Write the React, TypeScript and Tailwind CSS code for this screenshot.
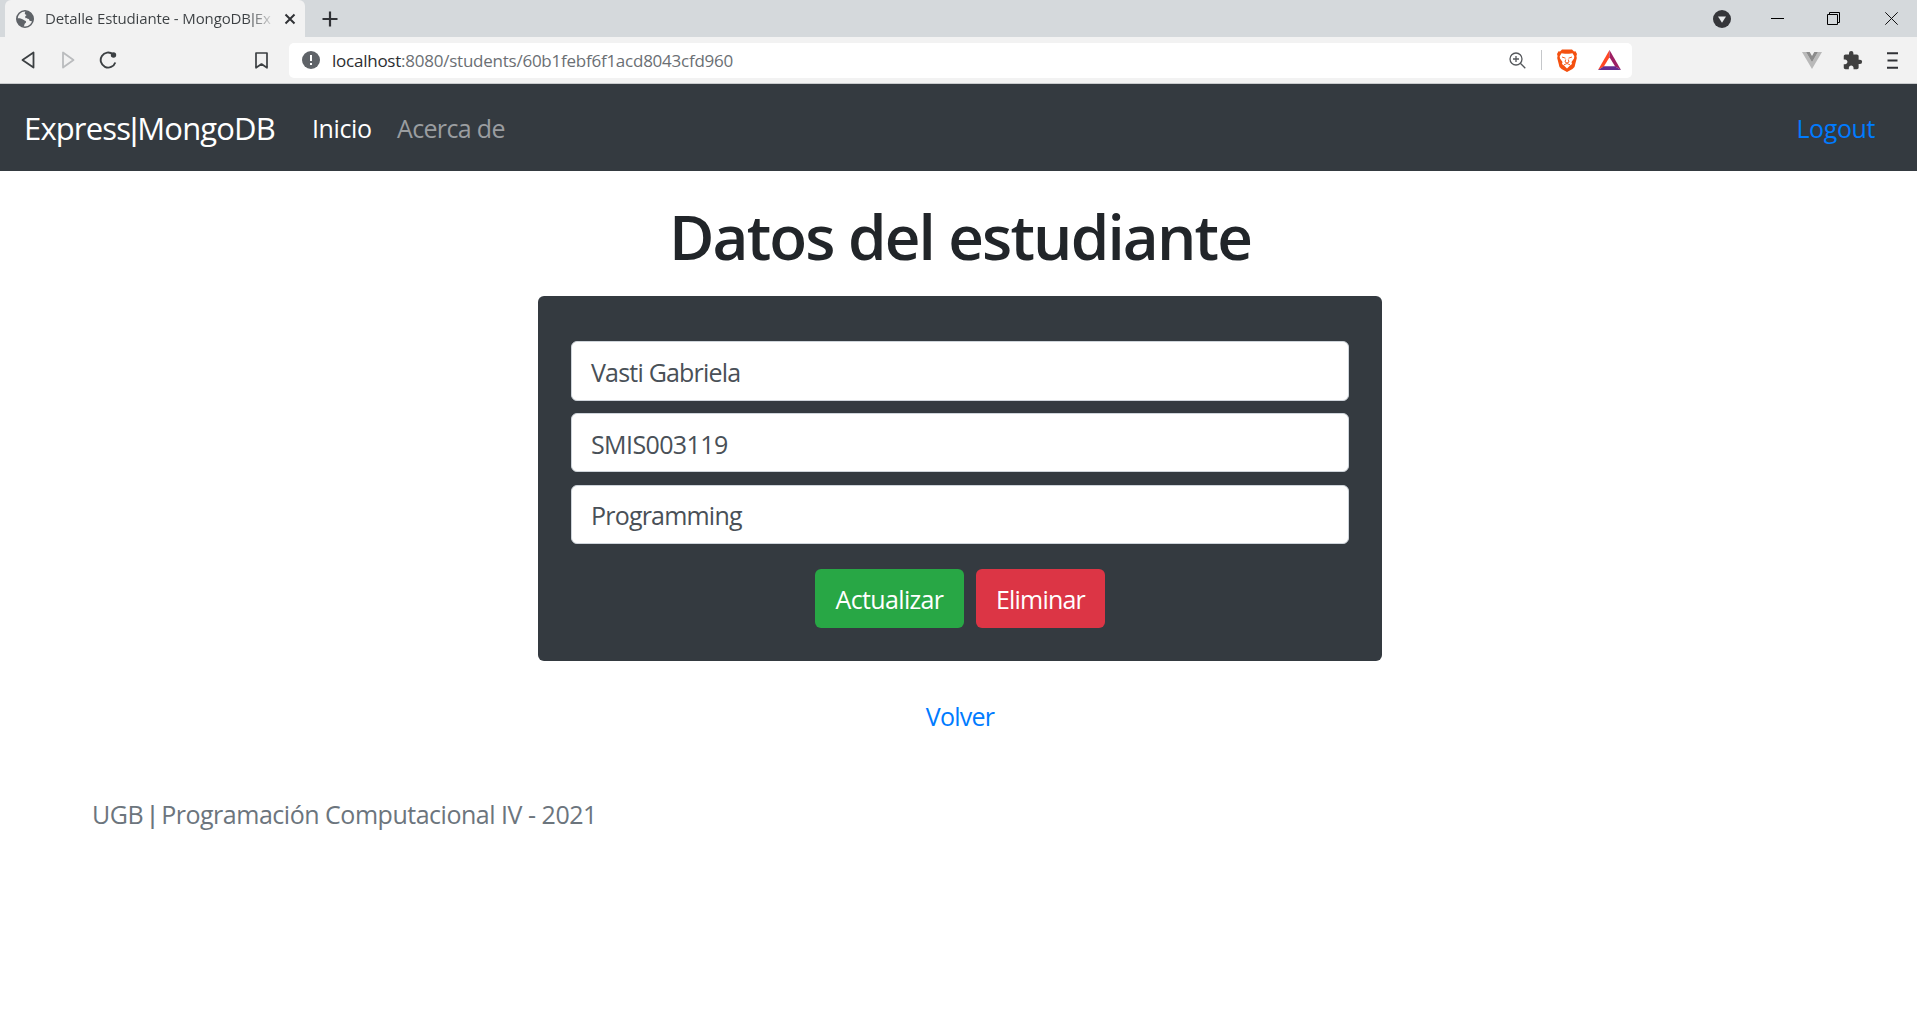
import { MdExtension } from "react-icons/md";

function Pipe() {
  return <span className="font-['Liberation_Sans',sans-serif]">|</span>;
}

function GlobeIcon() {
  return (
    <svg className="size-[18px] shrink-0" viewBox="0 0 18 18">
      <circle cx="9" cy="9" r="8.200" fill="#f2f2f2" stroke="#5f6368" strokeWidth="1.600" />
      <path d="M9.500 1 C14 1 17.300 4.500 17.300 9c0 1-.3 2-.6 2.800-1-.9-1.700-.8-2.600-.9-.9-.2-.6-1.400-1.400-2-1-.6-2.500 0-3.200-.9-.6-.9-.3-2 .6-2.400.7-.4.3-1-.5-1.200-.9-.3-.9-1.200-.6-2z" fill="#5f6368" />
      <path d="M.9 8.300 C3.500 8 6.200 8.600 7.400 9.800c1 1 2.500.9 2.700 2 .2 1.200-1.200 1.400-1.600 2.400-.3.900-.2 1.900-1 2.500C3.500 16.300.7 13 .9 8.300z" fill="#5f6368" />
    </svg>
  );
}

function TabStrip() {
  return (
    <div className="flex h-[37px] bg-[#d5d9dc] pl-[5px]">
      <div className="flex w-[300px] items-center rounded-t-md bg-[#f2f2f2] pl-[11px]">
        <GlobeIcon />
        <span className="ml-[11px] w-[229px] shrink-0 bg-linear-to-r from-[#3c4043] from-88% to-transparent to-101% bg-clip-text text-[15px] tracking-[-0.12px] whitespace-nowrap text-transparent">
          Detalle Estudiante - MongoDB<Pipe />Ex
        </span>
        <svg className="ml-[10px] size-[12px] shrink-0" viewBox="0 0 12 12" stroke="#303236" strokeWidth="2" fill="none">
          <path d="M1.500 1.500l9 9M10.500 1.500l-9 9" />
        </svg>
      </div>
      <svg className="mt-[11px] ml-[17px] size-[16px]" viewBox="0 0 16 16" stroke="#303236" strokeWidth="2.2" fill="none">
        <path d="M8 0.500v15M0.500 8h15" />
      </svg>
      <div className="ml-auto flex items-start">
        <svg className="mt-[10px] mr-[40px] size-[18px]" viewBox="0 0 18 18">
          <circle cx="9" cy="9" r="9" fill="#35363a" />
          <path d="M5 6.500h8l-4 6.300z" fill="#e8eaec" />
        </svg>
        <svg className="mt-[12px] mr-[43px] size-[13px]" viewBox="0 0 13 13">
          <path d="M0 6.500h13" stroke="#000" />
        </svg>
        <svg className="mt-[12px] mr-[45px] size-[13px]" viewBox="0 0 13 13" fill="none" stroke="#000">
          <path d="M0.500 2.500h10v10h-10zM2.500 2.500v-2h10v10h-2" />
        </svg>
        <svg className="mt-[12px] mr-[19px] size-[13px]" viewBox="0 0 13 13" fill="none" stroke="#111">
          <path d="M0.300 0.300l12.400 12.400M12.700 0.300l-12.400 12.400" />
        </svg>
      </div>
    </div>
  );
}

function BraveLion() {
  return (
    <svg className="h-[23px] w-[20px]" viewBox="0 0 20 23">
      <path d="M5 .5h10l2 2 1.500-.3L20 5l-.6 2 .4 2-2.300 9-2 2L10 23l-5.500-3-2-2L.2 9l.4-2L0 5l1.500-2.800 1.500.3z" fill="#f4500f" />
      <path d="M4.500 4.300 8 4.800h4l3.500-.5 1.800 3-.3 2.200-2.500 3.500.5 2-2 1.500L10 19.500 7 16.500 5 15l.5-2L3 9.500l-.3-2.200z" fill="#fff" />
      <path d="M5 8l3.500 1.200M15 8l-3.500 1.200M8.700 10.500 8 13l2 1 2-1-.7-2.500M7 15.800l3-1.300 3 1.300" fill="none" stroke="#f4500f" strokeWidth="0.900" />
    </svg>
  );
}

function Toolbar() {
  return (
    <div className="flex h-[47px] items-center border-b border-[#c9cbcd] bg-[#f2f2f2]">
      <svg className="ml-[21px] h-[18px] w-[14px]" viewBox="0 0 14 18" fill="none" stroke="#3c4043" strokeWidth="1.800" strokeLinejoin="round">
        <path d="M12.500 1.500v15L1.500 9z" />
      </svg>
      <svg className="ml-[27px] h-[18px] w-[13px]" viewBox="0 0 13 18" fill="none" stroke="#babcbe" strokeWidth="1.800" strokeLinejoin="round">
        <path d="M1 1.500v15L11.500 9z" />
      </svg>
      <svg className="ml-[24px] size-[18px]" viewBox="0 0 18 18" fill="none" stroke="#3c4043" strokeWidth="1.900">
        <path d="M16.300 11.500A7.500 7.500 0 1 1 14 3.300" />
        <circle cx="14.500" cy="4" r="2.700" fill="#3c4043" stroke="none" />
      </svg>
      <svg className="ml-[138px] h-[17px] w-[13px]" viewBox="0 0 13 17" fill="none" stroke="#3c4043" strokeWidth="1.700" strokeLinejoin="round">
        <path d="M1 1h11v14.800L6.500 12 1 15.800z" />
      </svg>
      <div className="ml-[21px] flex h-[35px] w-[1343px] items-center rounded-[5px] bg-white pl-[13px]">
        <svg className="size-[18px]" viewBox="0 0 18 18">
          <circle cx="9" cy="9" r="9" fill="#5f6368" />
          <path d="M9 4v6M9 12v2" stroke="#fff" strokeWidth="2" />
        </svg>
        <span className="mt-px ml-[12px] text-[17px] tracking-[-0.24px] text-[#6b6f74]">
          <span className="text-[#2b2d30]">localhost</span>:8080/students/60b1febf6f1acd8043cfd960
        </span>
        <svg className="ml-auto size-[17px]" viewBox="0 0 17 17" fill="none" stroke="#55585c" strokeWidth="1.300">
          <circle cx="7" cy="7" r="6" />
          <path d="M11.300 11.300l5 5M7 4v6M4 7h6" />
        </svg>
        <span className="ml-[15px] h-[20px] w-px bg-[#c5c7ca]" />
        <span className="ml-[15px]"><BraveLion /></span>
        <svg className="mr-[11px] ml-[21px] h-[20px] w-[23px]" viewBox="0 0 23 20">
          <path d="M11.500 0 0 20l6-3.700 5.500-9z" fill="#ff4724" />
          <path d="M11.500 0v7.300L17 16.300l6 3.700z" fill="#9e1f63" />
          <path d="M0 20h23l-6-3.700H6z" fill="#662d91" />
        </svg>
      </div>
      <svg className="ml-auto h-[17px] w-[20px]" viewBox="0 0 20 17">
        <path d="M0 0h4l6 10.300L16 0h4L10 17z" fill="#b9b9b9" />
        <path d="M4 0h3.700L10 4l2.300-4H16l-6 10.300z" fill="#8c8c8c" />
      </svg>
      <MdExtension className="ml-[20px] size-[21px] text-[#404040]" />
      <svg className="mr-[19px] ml-[24px] h-[17px] w-[11px]" viewBox="0 0 11 17" stroke="#303236" strokeWidth="1.900">
        <path d="M0 1.200h11M0.500 8.500h10M0 15.800h11" />
      </svg>
    </div>
  );
}

function Navbar() {
  return (
    <nav className="flex h-[87px] items-center bg-[#343a40] pt-[3px] pr-[42px] pl-[24px] text-[25px]">
      <span className="w-[251px] text-[31px] tracking-[-0.85px] whitespace-nowrap text-white">
        Express<Pipe />MongoDB
      </span>
      <span className="ml-[37px] w-[60px] tracking-[-0.4px] text-white">Inicio</span>
      <span className="ml-[25px] tracking-[-0.65px] text-[#9a9da0]">Acerca de</span>
      <a className="ml-auto tracking-[-0.4px] text-[#007bff]">Logout</a>
    </nav>
  );
}

function Field({ value, tracking }: { value: string; tracking: string }) {
  return (
    <div className="flex h-[59.5px] items-center rounded-[6px] border border-[#ced4da] bg-white pt-[2px] pl-[19px] text-[#495057]">
      <span className={tracking}>{value}</span>
    </div>
  );
}

export default function App() {
  return (
    <div className="flex h-[1030px] w-[1917px] flex-col overflow-hidden bg-white font-['Open_Sans','Noto_Sans',sans-serif]">
      <TabStrip />
      <Toolbar />
      <Navbar />
      <main className="flex flex-col items-center pt-[24px] pl-[3px] text-[25px] leading-[38px]">
        <h1 className="h-[101px] text-[62px] leading-[82px] font-semibold tracking-[-1.85px] text-[#212529]">Datos del estudiante</h1>
        <section className="flex h-[365px] w-[844px] flex-col rounded-[6px] bg-[#343a40] px-[33px] pt-[45px]">
          <div className="flex flex-col gap-[12.3px]">
            <Field value="Vasti Gabriela" tracking="tracking-[-0.8px]" />
            <Field value="SMIS003119" tracking="tracking-[-0.6px]" />
            <Field value="Programming" tracking="tracking-[-0.8px]" />
          </div>
          <div className="mt-[24.9px] flex justify-center gap-[12px] text-white">
            <button className="h-[59px] w-[149px] rounded-[6px] bg-[#28a745] pt-px tracking-[-0.65px]">Actualizar</button>
            <button className="h-[59px] w-[129px] rounded-[6px] bg-[#dc3545] pt-px tracking-[-0.8px]">Eliminar</button>
          </div>
        </section>
        <a className="mt-[36px] tracking-[-0.75px] text-[#007bff]">Volver</a>
      </main>
      <footer className="mt-[60px] pl-[92px] text-[25px] leading-[38px] tracking-[-0.48px] text-[#6c757d]">
        UGB <Pipe /> Programación Computacional IV - 2021
      </footer>
    </div>
  );
}
